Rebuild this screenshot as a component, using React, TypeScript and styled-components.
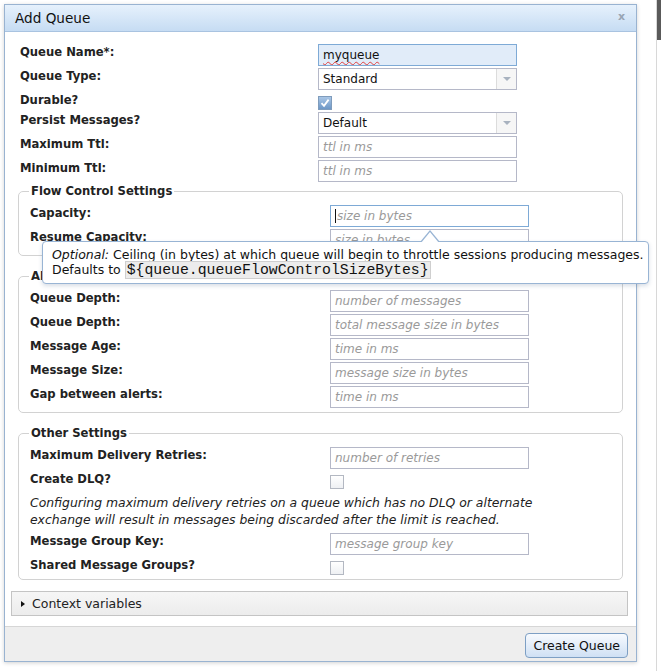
import React from "react";
import styled, { createGlobalStyle } from "styled-components";

const GlobalStyle = createGlobalStyle`
  html, body {
    margin: 0;
    padding: 0;
    background: #ffffff;
  }
  body {
    font-family: "Lucida Grande", "DejaVu Sans", sans-serif;
    color: #222;
  }
`;

const Page = styled.div`
  position: relative;
  width: 661px;
  height: 671px;
  overflow: hidden;
  background: #fff;
`;

// strip of the page that sits behind the dialog on the right
const PageEdge = styled.div`
  position: absolute;
  right: 0;
  top: 0;
  width: 4px;
  height: 671px;
  border-left: 1px solid #d8d8d8;
  background: linear-gradient(#5a5a5a 0, #5a5a5a 40px, #fff 40px);
`;

const Dialog = styled.div`
  position: relative;
  box-sizing: border-box;
  width: 633px;
  margin: 4px 0 0 4px;
  border: 1px solid #99b3d1;
  background: #fff;
  box-shadow: 0 1px 4px rgba(0, 0, 0, 0.18);
`;

const TitleBar = styled.div`
  display: flex;
  align-items: center;
  justify-content: space-between;
  height: 26px;
  padding: 0 11px 0 10px;
  background: linear-gradient(#e6f1fc, #c6dcf3);
  border-bottom: 1px solid #a9c3e0;
  font-size: 13.6px;
  color: #111;
`;

const Close = styled.span`
  font-size: 11px;
  font-weight: bold;
  color: #98a4b3;
  margin-top: -3px;
`;

const Body = styled.div`
  padding: 12px 0 10px 0;
`;

const Grid = styled.div<{ $labelWidth: number }>`
  display: grid;
  grid-template-columns: ${(p) => p.$labelWidth}px 199px;
  row-gap: 2px;
  align-items: start;
`;

const TopGrid = styled(Grid)`
  margin-left: 15px;
`;

const Label = styled.div`
  font-size: 11.6px;
  font-weight: bold;
  line-height: 14px;
  padding-top: 1px;
  color: #222;
`;

const Input = styled.div<{ $focus?: boolean; $filled?: boolean }>`
  box-sizing: border-box;
  height: 22px;
  padding: 0 4px;
  display: flex;
  align-items: center;
  border: 1px solid ${(p) => (p.$focus ? "#7eaad6" : "#b5b8c8")};
  background: ${(p) => (p.$filled ? "#e1ecf9" : "#fff")};
  font-size: 12px;
  color: #111;
  overflow: hidden;
  white-space: nowrap;
`;

const Placeholder = styled.span`
  font-style: italic;
  color: #9a9a9a;
`;

const Caret = styled.span`
  display: inline-block;
  width: 1px;
  height: 14px;
  background: #111;
  margin-right: 1px;
`;

const Spell = styled.span`
  text-decoration: underline wavy #e04040;
  text-decoration-thickness: 1px;
  text-underline-offset: 2px;
`;

const Select = styled.div`
  box-sizing: border-box;
  height: 22px;
  display: flex;
  border: 1px solid #b5b8c8;
  background: #fff;
  font-size: 12px;
  color: #111;
`;

const SelectValue = styled.div`
  flex: 1;
  display: flex;
  align-items: center;
  padding: 0 4px;
`;

const Trigger = styled.div`
  width: 19px;
  display: flex;
  align-items: center;
  justify-content: center;
  background: #f6f6f6;
  border-left: 1px solid #dcdcdc;
  &::after {
    content: "";
    border-left: 4px solid transparent;
    border-right: 4px solid transparent;
    border-top: 4px solid #a8b2bf;
  }
`;

const CheckCell = styled.div`
  height: 18px;
  display: flex;
  align-items: flex-start;
  padding-top: 4px;
  box-sizing: border-box;
`;

const Box = styled.span<{ $checked?: boolean }>`
  box-sizing: border-box;
  width: 14px;
  height: 14px;
  display: inline-flex;
  align-items: center;
  justify-content: center;
  border: 1px solid ${(p) => (p.$checked ? "#7f9cbc" : "#b3b8c2")};
  background: ${(p) =>
    p.$checked
      ? "linear-gradient(#a9c6e6, #6d97c6)"
      : "linear-gradient(#fff, #eef0f3)"};
`;

const Fieldset = styled.fieldset<{ $gap: number }>`
  margin: ${(p) => p.$gap}px 13px 0 13px;
  padding: 0 0 4px 11px;
  border: 1px solid #d2d2d2;
  border-radius: 5px;
`;

const Legend = styled.legend`
  padding: 0 2px;
  margin-left: -1px;
  font-size: 11.6px;
  font-weight: bold;
  line-height: 14px;
  color: #222;
`;

const FieldGrid = styled(Grid)`
  margin-top: 7px;
`;

const Note = styled.div`
  grid-column: 1 / span 2;
  font-size: 12.4px;
  font-style: italic;
  line-height: 17px;
  color: #222;
  white-space: nowrap;
  padding: 3px 0 3px;
`;

const Expander = styled.div`
  display: flex;
  align-items: center;
  gap: 7px;
  box-sizing: border-box;
  height: 25px;
  margin: 11px 8px 0 6px;
  padding-left: 9px;
  border: 1px solid #c4c4c4;
  background: linear-gradient(#f6f6f6, #ececec);
  font-size: 12.5px;
  color: #222;
  &::before {
    content: "";
    border-top: 3.5px solid transparent;
    border-bottom: 3.5px solid transparent;
    border-left: 4px solid #111;
  }
`;

const Footer = styled.div`
  display: flex;
  justify-content: flex-end;
  padding: 6px 8px 4px;
  height: 35px;
  box-sizing: border-box;
  border-top: 1px solid #d6d6d6;
  background: #eeeeee;
`;

const Button = styled.button`
  height: 25px;
  padding: 0 7px;
  border: 1px solid #7d9fc4;
  border-radius: 4px;
  background: linear-gradient(#f7fafe, #cfe0f4);
  font-family: "Lucida Grande", "DejaVu Sans", sans-serif;
  font-size: 12.5px;
  color: #111;
`;

const Tooltip = styled.div`
  position: absolute;
  left: 42px;
  top: 241px;
  box-sizing: border-box;
  width: 607px;
  height: 43px;
  padding: 5px 0 0 9px;
  border: 1px solid #98b4d4;
  border-radius: 4px;
  background: #fff;
  box-shadow: 0 2px 4px rgba(60, 90, 130, 0.2);
  font-size: 12.5px;
  line-height: 15px;
  color: #111;
  white-space: nowrap;
  &::before,
  &::after {
    content: "";
    position: absolute;
    left: 377px;
    border-left: 10px solid transparent;
    border-right: 10px solid transparent;
  }
  &::before {
    top: -12px;
    border-bottom: 12px solid #98b4d4;
  }
  &::after {
    top: -10px;
    left: 378px;
    border-left-width: 9px;
    border-right-width: 9px;
    border-bottom: 11px solid #fff;
  }
`;

const Code = styled.code`
  font-family: "Liberation Mono", "DejaVu Sans Mono", monospace;
  font-size: 14.8px;
  background: #ececec;
  border: 1px solid #cfcfcf;
  padding: 0 1px;
`;

const Check = () => (
  <svg width="10" height="10" viewBox="0 0 10 10">
    <path d="M1.5 5.2 L4 7.8 L8.6 1.6" fill="none" stroke="#fff" strokeWidth="1.8" />
  </svg>
);

type Row = { label: string; hint: string; focus?: boolean };

const flowRows: Row[] = [
  { label: "Capacity:", hint: "size in bytes", focus: true },
  { label: "Resume Capacity:", hint: "size in bytes" },
];

const alertRows: Row[] = [
  { label: "Queue Depth:", hint: "number of messages" },
  { label: "Queue Depth:", hint: "total message size in bytes" },
  { label: "Message Age:", hint: "time in ms" },
  { label: "Message Size:", hint: "message size in bytes" },
  { label: "Gap between alerts:", hint: "time in ms" },
];

const TextRows = ({ rows }: { rows: Row[] }) => (
  <>
    {rows.map((r, i) => (
      <React.Fragment key={i}>
        <Label>{r.label}</Label>
        <Input $focus={r.focus}>
          {r.focus && <Caret />}
          <Placeholder>{r.hint}</Placeholder>
        </Input>
      </React.Fragment>
    ))}
  </>
);

export default function App() {
  return (
    <Page>
      <GlobalStyle />
      <PageEdge />
      <Dialog>
        <TitleBar>
          <span>Add Queue</span>
          <Close>x</Close>
        </TitleBar>
        <Body>
          <TopGrid $labelWidth={298}>
            <Label>Queue Name*:</Label>
            <Input $focus $filled>
              <Spell>myqueue</Spell>
            </Input>
            <Label>Queue Type:</Label>
            <Select>
              <SelectValue>Standard</SelectValue>
              <Trigger />
            </Select>
            <Label>Durable?</Label>
            <CheckCell>
              <Box $checked>
                <Check />
              </Box>
            </CheckCell>
            <Label>Persist Messages?</Label>
            <Select>
              <SelectValue>Default</SelectValue>
              <Trigger />
            </Select>
            <Label>Maximum Ttl:</Label>
            <Input>
              <Placeholder>ttl in ms</Placeholder>
            </Input>
            <Label>Minimum Ttl:</Label>
            <Input>
              <Placeholder>ttl in ms</Placeholder>
            </Input>
          </TopGrid>

          <Fieldset $gap={2}>
            <Legend>Flow Control Settings</Legend>
            <FieldGrid $labelWidth={300}>
              <TextRows rows={flowRows} />
            </FieldGrid>
          </Fieldset>

          <Fieldset $gap={13}>
            <Legend>Alerting Settings</Legend>
            <FieldGrid $labelWidth={300}>
              <TextRows rows={alertRows} />
            </FieldGrid>
          </Fieldset>

          <Fieldset $gap={13}>
            <Legend>Other Settings</Legend>
            <FieldGrid $labelWidth={300}>
              <Label>Maximum Delivery Retries:</Label>
              <Input>
                <Placeholder>number of retries</Placeholder>
              </Input>
              <Label>Create DLQ?</Label>
              <CheckCell>
                <Box />
              </CheckCell>
              <Note>
                Configuring maximum delivery retries on a queue which has no DLQ or alternate
                <br />
                exchange will result in messages being discarded after the limit is reached.
              </Note>
              <Label>Message Group Key:</Label>
              <Input>
                <Placeholder>message group key</Placeholder>
              </Input>
              <Label>Shared Message Groups?</Label>
              <CheckCell>
                <Box />
              </CheckCell>
            </FieldGrid>
          </Fieldset>

          <Expander>Context variables</Expander>
        </Body>
        <Footer>
          <Button>Create Queue</Button>
        </Footer>
      </Dialog>

      <Tooltip>
        <div>
          <i>Optional:</i> Ceiling (in bytes) at which queue will begin to throttle sessions
          producing messages.
        </div>
        <div>
          Defaults to <Code>{"${queue.queueFlowControlSizeBytes}"}</Code>
        </div>
      </Tooltip>
    </Page>
  );
}
